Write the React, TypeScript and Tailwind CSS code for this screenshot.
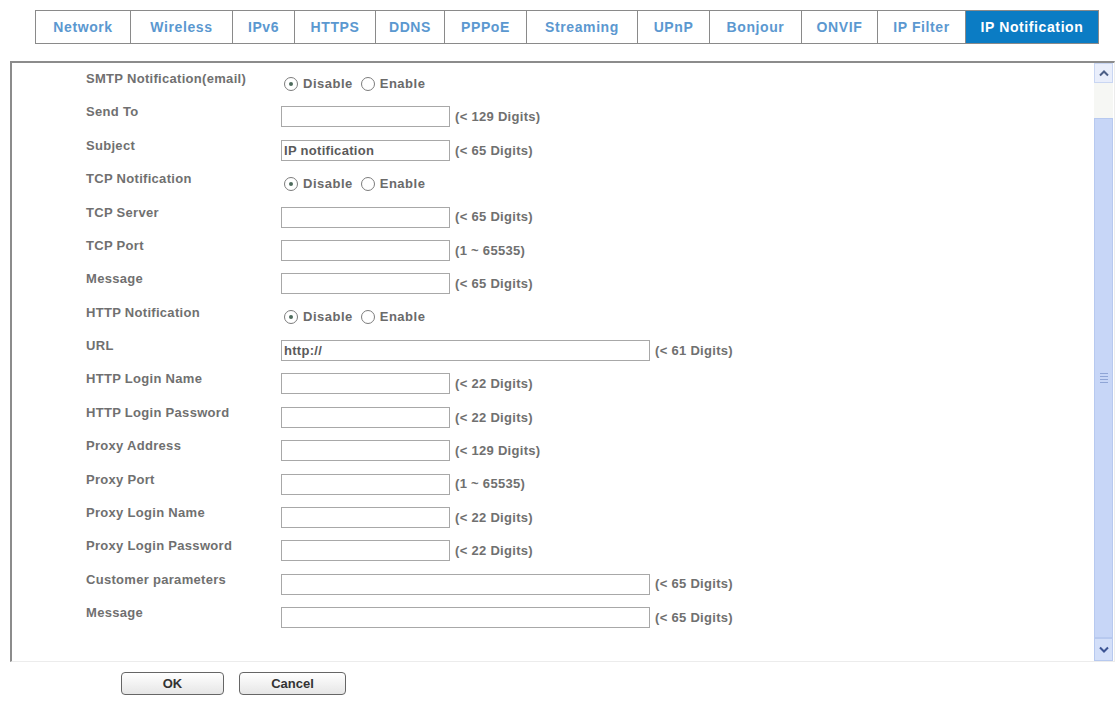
import React from 'react';

type Row = {
  label: string;
  kind: 'radio' | 'input';
  wide?: boolean;
  value?: string;
  hint?: string;
};

const tabs = [
  { name: 'Network', w: 'w-[96px]' },
  { name: 'Wireless', w: 'w-[102px]' },
  { name: 'IPv6', w: 'w-[62px]' },
  { name: 'HTTPS', w: 'w-[81px]' },
  { name: 'DDNS', w: 'w-[69px]' },
  { name: 'PPPoE', w: 'w-[82px]' },
  { name: 'Streaming', w: 'w-[111px]' },
  { name: 'UPnP', w: 'w-[72px]' },
  { name: 'Bonjour', w: 'w-[92px]' },
  { name: 'ONVIF', w: 'w-[76px]' },
  { name: 'IP Filter', w: 'w-[88px]' },
  { name: 'IP Notification', w: 'w-[133px]', active: true },
];

const rows: Row[] = [
  { label: 'SMTP Notification(email)', kind: 'radio' },
  { label: 'Send To', kind: 'input', hint: '(< 129 Digits)' },
  { label: 'Subject', kind: 'input', value: 'IP notification', hint: '(< 65 Digits)' },
  { label: 'TCP Notification', kind: 'radio' },
  { label: 'TCP Server', kind: 'input', hint: '(< 65 Digits)' },
  { label: 'TCP Port', kind: 'input', hint: '(1 ~ 65535)' },
  { label: 'Message', kind: 'input', hint: '(< 65 Digits)' },
  { label: 'HTTP Notification', kind: 'radio' },
  { label: 'URL', kind: 'input', wide: true, value: 'http://', hint: '(< 61 Digits)' },
  { label: 'HTTP Login Name', kind: 'input', hint: '(< 22 Digits)' },
  { label: 'HTTP Login Password', kind: 'input', hint: '(< 22 Digits)' },
  { label: 'Proxy Address', kind: 'input', hint: '(< 129 Digits)' },
  { label: 'Proxy Port', kind: 'input', hint: '(1 ~ 65535)' },
  { label: 'Proxy Login Name', kind: 'input', hint: '(< 22 Digits)' },
  { label: 'Proxy Login Password', kind: 'input', hint: '(< 22 Digits)' },
  { label: 'Customer parameters', kind: 'input', wide: true, hint: '(< 65 Digits)' },
  { label: 'Message', kind: 'input', wide: true, hint: '(< 65 Digits)' },
];

function Radio({ checked }: { checked?: boolean }) {
  return (
    <span className="flex h-[14px] w-[14px] items-center justify-center rounded-full border border-[#7c7c7c] bg-white">
      {checked && <span className="h-[4px] w-[4px] rounded-full bg-[#4d6b5c]" />}
    </span>
  );
}

function FormRow({ row }: { row: Row }) {
  return (
    <div className="flex h-[33.375px] items-start">
      <div className="w-[195px] pt-[5px] leading-[16px]">{row.label}</div>
      {row.kind === 'radio' ? (
        <div className="box-content flex h-[21px] items-center pt-[7px] pl-[3px] tracking-[0.5px] text-[#6a6a6a]">
          <Radio checked />
          <span className="ml-[5px]">Disable</span>
          <span className="ml-[8px]">
            <Radio />
          </span>
          <span className="ml-[5px]">Enable</span>
        </div>
      ) : (
        <div className="flex items-center pt-[7px]">
          <input
            type="text"
            defaultValue={row.value}
            className={`${row.wide ? 'w-[369px]' : 'w-[169px]'} h-[21px] border border-[#a8a8a8] bg-white pl-[2px] text-[13px] font-bold tracking-[0.3px] text-[#5a5a5a] outline-none`}
          />
          <span className="ml-[5px] text-[#707070]">{row.hint}</span>
        </div>
      )}
    </div>
  );
}

function ScrollBar() {
  return (
    <div className="mr-[1px] flex w-[19px] flex-col">
      <div className="flex h-[20px] items-center justify-center border border-[#c9d6f2] bg-[#e9eefb]">
        <svg width="10" height="7" viewBox="0 0 10 7">
          <path d="M1 5.5 L5 1.5 L9 5.5" fill="none" stroke="#4c5f86" strokeWidth="2" />
        </svg>
      </div>
      <div className="h-[35px] bg-[#f6f7f4]" />
      <div className="flex flex-1 flex-col items-center justify-center border border-[#b7c9ef] bg-[#c7d6f7]">
        <div className="flex flex-col gap-[2px]">
          <span className="h-[1px] w-[8px] bg-[#8fa5d6]" />
          <span className="h-[1px] w-[8px] bg-[#8fa5d6]" />
          <span className="h-[1px] w-[8px] bg-[#8fa5d6]" />
          <span className="h-[1px] w-[8px] bg-[#8fa5d6]" />
        </div>
      </div>
      <div className="flex h-[23px] items-center justify-center border border-[#b7c9ef] bg-[#d3dff9]">
        <svg width="10" height="7" viewBox="0 0 10 7">
          <path d="M1 1.5 L5 5.5 L9 1.5" fill="none" stroke="#3d5594" strokeWidth="2" />
        </svg>
      </div>
    </div>
  );
}

export default function App() {
  return (
    <div className="h-[701px] w-[1120px] overflow-hidden bg-white font-['Liberation_Sans',Arial,sans-serif]">
      <div className="ml-[35px] flex pt-[10px]">
        {tabs.map((tab, i) => (
          <div
            key={tab.name}
            className={`${tab.w} flex h-[34px] items-center justify-center border-y border-r border-[#8a8a8a] text-[14px] font-bold tracking-[0.6px] ${
              i === 0 ? 'border-l' : ''
            } ${tab.active ? 'border-[#0b7cc4] bg-[#0b7cc4] text-white' : 'bg-white text-[#5b98d0]'}`}
          >
            {tab.name}
          </div>
        ))}
      </div>

      <div className="ml-[10px] mt-[17px] flex h-[601px] w-[1105px] border-l-2 border-t-2 border-b border-r border-[#8c8c8c] border-b-[#ececec] border-r-[#ececec]">
        <div className="flex-1 pl-[74px] pt-[3px] text-[13px] font-bold tracking-[0.3px] text-[#707070]">
          {rows.map((row, i) => (
            <FormRow key={i} row={row} />
          ))}
        </div>
        <ScrollBar />
      </div>

      <div className="mt-[10px] flex pl-[121px]">
        <button className="h-[23px] w-[103px] rounded-[4px] border border-[#666] bg-gradient-to-b from-white to-[#e6e6e6] text-[13px] font-bold text-[#333]">
          OK
        </button>
        <button className="ml-[15px] h-[23px] w-[107px] rounded-[4px] border border-[#666] bg-gradient-to-b from-white to-[#e6e6e6] text-[13px] font-bold text-[#333]">
          Cancel
        </button>
      </div>
    </div>
  );
}
